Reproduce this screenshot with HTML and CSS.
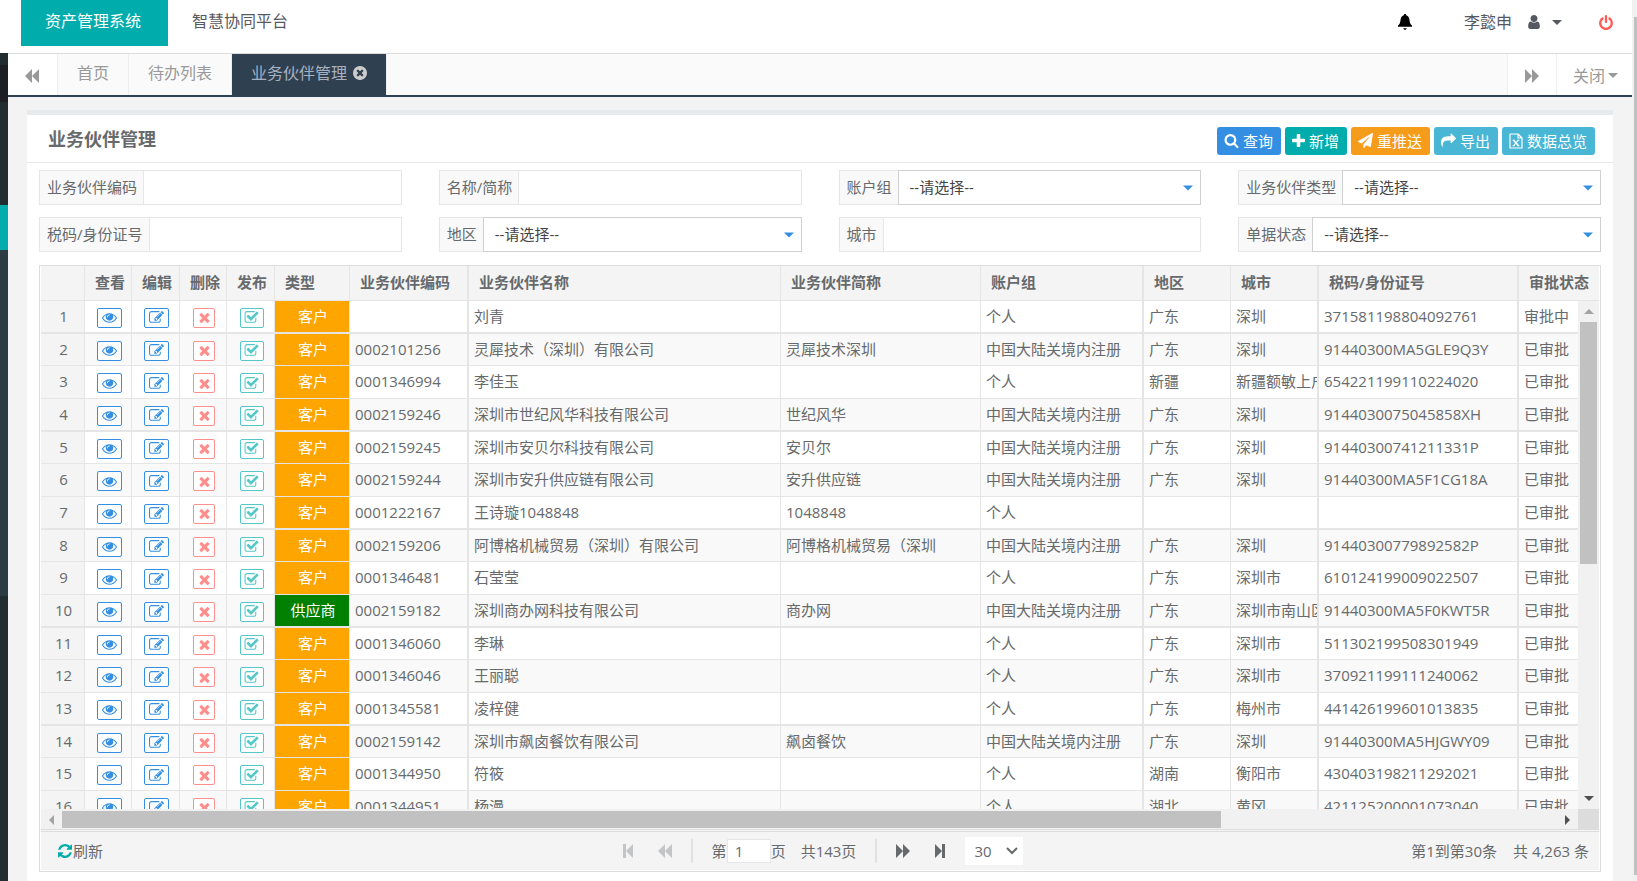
FILE: index.html
```html
<!DOCTYPE html>
<html lang="zh-CN">
<head>
<meta charset="utf-8">
<title>业务伙伴管理</title>
<link rel="stylesheet" href="styles.css">
</head>
<body>
<svg class="sprite" aria-hidden="true">
  <symbol id="i-eye" viewBox="0 0 1792 1792"><path d="M1664 960q-152-236-381-353 61 104 61 225 0 185-131.5 316.5t-316.5 131.5-316.5-131.5-131.5-316.5q0-121 61-225-229 117-381 353 133 205 333.5 326.5t434.5 121.5 434.5-121.5 333.5-326.5zm-720-384q0-20-14-34t-34-14q-125 0-214.5 89.5t-89.5 214.5q0 20 14 34t34 14 34-14 14-34q0-86 61-147t147-61q20 0 34-14t14-34zm848 384q0 34-20 69-140 230-376.5 368.5t-499.5 138.5-499.5-139-376.5-368q-20-35-20-69t20-69q140-229 376.5-368t499.5-139 499.5 139 376.5 368q20 35 20 69z"/></symbol>
  <symbol id="i-edit" viewBox="0 0 1792 1792"><path d="M888 1184l116-116-152-152-116 116v56h96v96h56zm440-720q-16-16-33 1l-350 350q-17 17-1 33t33-1l350-350q17-17 1-33zm80 594v190q0 119-84.5 203.5t-203.5 84.5h-832q-119 0-203.5-84.5t-84.5-203.5v-832q0-119 84.5-203.5t203.5-84.5h832q63 0 117 25 15 7 18 23 3 17-9 29l-49 49q-14 14-32 8-23-6-45-6h-832q-66 0-113 47t-47 113v832q0 66 47 113t113 47h832q66 0 113-47t47-113v-126q0-13 9-22l64-64q15-15 35-7t20 29zm-96-738l288 288-672 672h-288v-288zm444 132l-92 92-288-288 92-92q28-28 68-28t68 28l152 152q28 28 28 68t-28 68z"/></symbol>
  <symbol id="i-times" viewBox="0 0 1792 1792"><path d="M1490 1322q0 40-28 68l-136 136q-28 28-68 28t-68-28l-294-294-294 294q-28 28-68 28t-68-28l-136-136q-28-28-28-68t28-68l294-294-294-294q-28-28-28-68t28-68l136-136q28-28 68-28t68 28l294 294 294-294q28-28 68-28t68 28l136 136q28 28 28 68t-28 68l-294 294 294 294q28 28 28 68z"/></symbol>
  <symbol id="i-check" viewBox="0 0 1792 1792"><path d="M1472 930v318q0 119-84.5 203.5t-203.5 84.5h-832q-119 0-203.5-84.5t-84.5-203.5v-832q0-119 84.5-203.5t203.5-84.5h832q63 0 117 25 15 7 18 23 3 17-9 29l-49 49q-10 10-23 10-3 0-9-2-23-6-45-6h-832q-66 0-113 47t-47 113v832q0 66 47 113t113 47h832q66 0 113-47t47-113v-254q0-13 9-22l64-64q10-10 23-10 6 0 12 3 20 8 20 29zm231-489l-814 814q-24 24-57 24t-57-24l-430-430q-24-24-24-57t24-57l110-110q24-24 57-24t57 24l263 263 647-647q24-24 57-24t57 24l110 110q24 24 24 57t-24 57z"/></symbol>
  <symbol id="i-search" viewBox="0 0 1792 1792"><path d="M1216 832q0-185-131.5-316.5t-316.5-131.5-316.5 131.5-131.5 316.5 131.5 316.5 316.5 131.5 316.5-131.5 131.5-316.5zm512 832q0 52-38 90t-90 38q-54 0-90-38l-343-342q-179 124-399 124-143 0-273.5-55.5t-225-150-150-225-55.5-273.5 55.5-273.5 150-225 225-150 273.5-55.5 273.5 55.5 225 150 150 225 55.5 273.5q0 220-124 399l343 343q37 37 37 90z"/></symbol>
  <symbol id="i-plus" viewBox="192 130 1408 1408"><path d="M1600 736v192q0 40-28 68t-68 28h-416v416q0 40-28 68t-68 28h-192q-40 0-68-28t-28-68v-416h-416q-40 0-68-28t-28-68v-192q0-40 28-68t68-28h416v-416q0-40 28-68t68-28h192q40 0 68 28t28 68v416h416q40 0 68 28t28 68z"/></symbol>
  <symbol id="i-send" viewBox="0 0 1792 1792"><path d="M1764 11q33 24 27 64l-256 1536q-5 29-32 45-14 8-31 8-11 0-24-5l-453-185-242 295q-18 23-49 23-13 0-22-4-19-7-30.5-23.5t-11.5-36.5v-349l864-1059-1069 925-395-162q-37-14-40-55-2-40 32-59l1664-960q15-9 32-9 20 0 36 11z"/></symbol>
  <symbol id="i-share" viewBox="0 0 1792 1792"><path d="M1792 640q0 26-19 45l-512 512q-19 19-45 19t-45-19-19-45v-256h-224q-98 0-175.5 6t-154 21.5-133 42.5-105.5 69.5-80 101-48.5 138.5-17.5 181q0 55 5 123 0 6 2.5 23.5t2.5 26.5q0 15-8.5 25t-23.5 10q-16 0-28-17-7-9-13-22t-13.5-30-10.5-24q-127-285-127-451 0-199 53-333 162-403 875-403h224v-256q0-26 19-45t45-19 45 19l512 512q19 19 19 45z"/></symbol>
  <symbol id="i-excel" viewBox="0 0 14 16"><path fill="none" stroke="currentColor" stroke-width="1.2" stroke-linejoin="round" d="M1 1h8l4 4v10H1zM9 1v4h4"/><path fill="none" stroke="currentColor" stroke-width="1.6" d="M4.5 7.2l5 5.6"/><path fill="none" stroke="currentColor" stroke-width="1.1" d="M9.3 7.2l-4.8 5.6M3.6 7.2h2.2M8.2 7.2h2.2M3.6 12.8h2.2M8.2 12.8h2.2"/></symbol>
  <symbol id="i-bell" viewBox="0 0 14 16"><path d="M7 0c.8 0 1.200.5 1.200 1.300C10.400 2 11.300 3.800 11.500 6c.2 2.800.8 4 2.500 5.500v1.300H0v-1.300C1.700 10 2.300 8.800 2.500 6c.2-2.200 1.100-4 3.300-4.700C5.800.5 6.200 0 7 0zM5.200 14.300h3.600c-.2.9-.9 1.500-1.800 1.500s-1.600-.6-1.800-1.500z"/></symbol>
  <symbol id="i-user" viewBox="256 128 1280 1536"><path d="M1536 1399q0 109-62.5 187t-150.5 78h-854q-88 0-150.5-78t-62.5-187q0-85 8.500-160.500t31.500-152 58.500-131 94-89 134.500-34.500q131 128 313 128t313-128q76 0 134.500 34.500t94 89 58.500 131 31.500 152 8.500 160.500zm-256-887q0 159-112.500 271.500t-271.500 112.500-271.500-112.500-112.500-271.500 112.500-271.500 271.500-112.500 271.500 112.500 112.500 271.500z"/></symbol>
  <symbol id="i-power" viewBox="128 0 1536 1664"><path d="M1664 896q0 156-61 298t-164 245-245 164-298 61-298-61-245-164-164-245-61-298q0-182 80.500-343t226.500-270q43-32 95.500-25t83.500 50q32 42 24.500 94.500t-49.500 84.500q-98 74-151.500 181t-53.500 228q0 104 40.500 198.500t109.500 163.500 163.500 109.500 198.500 40.500 198.500-40.500 163.500-109.500 109.500-163.500 40.500-198.500q0-121-53.500-228t-151.500-181q-42-32-49.500-84.500t24.500-94.500q31-43 84-50t95 25q146 109 226.500 270t80.500 343zm-640-768v640q0 52-38 90t-90 38-90-38-38-90v-640q0-52 38-90t90-38 90 38 38 90z"/></symbol>
  <symbol id="i-close" viewBox="128 128 1536 1536"><path d="M1277 1122q0-26-19-45l-181-181 181-181q19-19 19-45 0-27-19-46l-90-90q-19-19-46-19-26 0-45 19l-181 181-181-181q-19-19-45-19-27 0-46 19l-90 90q-19 19-19 46 0 26 19 45l181 181-181 181q-19 19-19 45 0 27 19 46l90 90q19 19 46 19 26 0 45-19l181-181 181 181q19 19 45 19 27 0 46-19l90-90q19-19 19-46zm387-226q0 209-103 385.500t-279.500 279.500-385.500 103-385.500-103-279.500-279.500-103-385.500 103-385.500 279.500-279.500 385.500-103 385.500 103 279.500 279.500 103 385.500z"/></symbol>
  <symbol id="i-refresh" viewBox="128 128 1536 1536"><path d="M1639 1056q0 5-1 7-64 268-268 434.500t-478 166.500q-146 0-282.500-55t-243.500-157l-129 129q-19 19-45 19t-45-19-19-45v-448q0-26 19-45t45-19h448q26 0 45 19t19 45-19 45l-137 137q71 66 161 102t187 36q134 0 250-65t186-179q11-17 53-117 8-23 30-23h192q13 0 22.500 9.500t9.500 22.500zm25-800v448q0 26-19 45t-45 19h-448q-26 0-45-19t-19-45 19-45l138-138q-148-137-349-137-134 0-250 65t-186 179q-11 17-53 117-8 23-30 23h-199q-13 0-22.500-9.500t-9.500-22.500v-7q65-268 270-434.500t480-166.500q146 0 284 55.500t245 156.500l130-129q19-19 45-19t45 19 19 45z"/></symbol>
  <symbol id="i-back" viewBox="0 0 14 14"><path d="M7 0v14L0 7zM14 0v14L7 7z"/></symbol>
  <symbol id="i-forward" viewBox="0 0 14 14"><path d="M0 0v14l7-7zM7 0v14l7-7z"/></symbol>
  <symbol id="i-first" viewBox="0 0 10 14"><path d="M0 0h3v14H0zM10 0v14L3 7z"/></symbol>
  <symbol id="i-last" viewBox="0 0 10 14"><path d="M7 0h3v14H7zM0 0v14l7-7z"/></symbol>
  <symbol id="i-caret" viewBox="0 0 10 5"><path d="M0 0h10L5 5z"/></symbol>
  <symbol id="i-chevron" viewBox="0 0 12 8"><path fill="none" stroke="currentColor" stroke-width="2" d="M1 1l5 5 5-5"/></symbol>
</svg>

<div class="window">
  <div class="screen">
    <header class="topbar">
      <nav class="systems">
        <a class="system system-on" href="#">资产管理系统</a>
        <a class="system" href="#">智慧协同平台</a>
      </nav>
      <div class="account">
        <button class="plain bell" type="button" aria-label="通知"><svg><use href="#i-bell"/></svg></button>
        <button class="plain user" type="button">李懿申<svg class="user-icon"><use href="#i-user"/></svg><svg class="caret"><use href="#i-caret"/></svg></button>
        <button class="plain power" type="button" aria-label="退出"><svg><use href="#i-power"/></svg></button>
      </div>
    </header>

    <div class="workspace">
      <aside class="rail"><i class="r1"></i><i class="r2"></i><i class="r3"></i><i class="r4"></i><i class="r5"></i><i class="r6"></i></aside>
      <div class="content">
        <nav class="tabs">
          <button class="tab tab-arrow" type="button" aria-label="向左"><svg><use href="#i-back"/></svg></button>
          <button class="tab" type="button">首页</button>
          <button class="tab" type="button">待办列表</button>
          <button class="tab tab-on" type="button">业务伙伴管理<svg><use href="#i-close"/></svg></button>
          <button class="tab tab-arrow tab-right" type="button" aria-label="向右"><svg><use href="#i-forward"/></svg></button>
          <button class="tab tab-close" type="button">关闭<svg class="caret"><use href="#i-caret"/></svg></button>
        </nav>

        <main class="panel">
          <div class="panel-head">
            <h1>业务伙伴管理</h1>
            <div class="actions">
              <button class="btn blue" type="button"><svg><use href="#i-search"/></svg>查询</button>
              <button class="btn teal" type="button"><svg class="small"><use href="#i-plus"/></svg>新增</button>
              <button class="btn orange" type="button"><svg><use href="#i-send"/></svg>重推送</button>
              <button class="btn sky" type="button"><svg><use href="#i-share"/></svg>导出</button>
              <button class="btn sky" type="button"><svg class="sheet"><use href="#i-excel"/></svg>数据总览</button>
            </div>
          </div>

          <form class="filters">
            <div class="field"><label for="f1">业务伙伴编码</label><input id="f1" type="text"></div>
            <div class="field"><label for="f2">名称/简称</label><input id="f2" type="text"></div>
            <div class="field"><label for="f3">账户组</label><div class="pick"><select id="f3"><option>--请选择--</option></select><svg><use href="#i-caret"/></svg></div></div>
            <div class="field"><label for="f4">业务伙伴类型</label><div class="pick"><select id="f4"><option>--请选择--</option></select><svg><use href="#i-caret"/></svg></div></div>
            <div class="field"><label for="f5">税码/身份证号</label><input id="f5" type="text"></div>
            <div class="field"><label for="f6">地区</label><div class="pick"><select id="f6"><option>--请选择--</option></select><svg><use href="#i-caret"/></svg></div></div>
            <div class="field"><label for="f7">城市</label><input id="f7" type="text"></div>
            <div class="field"><label for="f8">单据状态</label><div class="pick"><select id="f8"><option>--请选择--</option></select><svg><use href="#i-caret"/></svg></div></div>
          </form>

          <section class="grid">
            <table class="table head">
              <colgroup><col class="c-no"><col class="c-47"><col class="c-48"><col class="c-47"><col class="c-48"><col class="c-type"><col class="c-code"><col class="c-name"><col class="c-200"><col class="c-group"><col class="c-area"><col class="c-city"><col class="c-200"><col></colgroup>
              <thead><tr><th></th><th>查看</th><th>编辑</th><th>删除</th><th>发布</th><th>类型</th><th class="wide">业务伙伴编码</th><th>业务伙伴名称</th><th>业务伙伴简称</th><th class="wide">账户组</th><th>地区</th><th class="wide">城市</th><th class="wide">税码/身份证号</th><th>审批状态</th></tr></thead>
            </table>
            <div class="rows">
              <div class="viewport">
                <table class="table">
                  <colgroup><col class="c-no"><col class="c-47"><col class="c-48"><col class="c-47"><col class="c-48"><col class="c-type"><col class="c-code"><col class="c-name"><col class="c-200"><col class="c-group"><col class="c-area"><col class="c-city"><col class="c-200"><col></colgroup>
                  <tbody id="partners"></tbody>
                </table>
              </div>
              <div class="scroll scroll-y"><i class="arrow up"></i><div class="track"><i class="thumb"></i></div><i class="arrow down"></i></div>
              <div class="scroll scroll-x"><i class="arrow left"></i><div class="track"><i class="thumb"></i></div><i class="arrow right"></i></div>
              <div class="corner"></div>
            </div>
            <footer class="pager">
              <button class="plain refresh" type="button"><svg><use href="#i-refresh"/></svg>刷新</button>
              <div class="pages">
                <button class="plain off" type="button" aria-label="首页"><svg class="end"><use href="#i-first"/></svg></button>
                <button class="plain off prev" type="button" aria-label="上一页"><svg><use href="#i-back"/></svg></button>
                <i class="sep"></i>
                <label class="page-no">第<input type="text" value="1">页</label>
                <span class="total">共143页</span>
                <i class="sep"></i>
                <button class="plain next" type="button" aria-label="下一页"><svg><use href="#i-forward"/></svg></button>
                <button class="plain last" type="button" aria-label="末页"><svg class="end"><use href="#i-last"/></svg></button>
                <div class="size"><select aria-label="每页条数"><option>30</option></select><svg><use href="#i-chevron"/></svg></div>
              </div>
              <div class="summary"><span>第1到第30条</span><span>共 4,263 条</span></div>
            </footer>
          </section>
        </main>
      </div>
    </div>
  </div>
  <div class="page-scroll"><i></i></div>
</div>
<script src="app.js"></script>
</body>
</html>
```
FILE: styles.css
```css
* { box-sizing: border-box; }
body {
  margin: 0;
  font: 15px/20px "Open Sans", "Noto Sans CJK SC", sans-serif;
  color: #676a6c;
  background: #fff;
}
button, input, select { font: inherit; color: inherit; }
button { cursor: pointer; }
i { display: block; }
svg { width: 14px; height: 14px; fill: currentColor; flex: none; }
.sprite { position: absolute; width: 0; height: 0; }
.plain { display: flex; align-items: center; padding: 0; border: 0; background: none; }
.caret { width: 10px; height: 5px; }

.window { display: flex; height: 100vh; overflow: hidden; }
.screen { flex: 1; min-width: 0; display: flex; flex-direction: column; }
.page-scroll { width: 5px; padding: 17px 0 6px 2px; background: #f1f1f1; }
.page-scroll i { height: 100%; background: #c1c1c1; }

/* Top bar */
.topbar { display: flex; justify-content: space-between; align-items: flex-start; height: 53px; padding: 0 19px 0 21px; font-size: 16px; }
.systems { display: flex; }
.system { height: 46px; padding: 0 27px 0 24px; line-height: 42px; color: #575962; text-decoration: none; }
.system-on { background: #00acac; color: #fff; }
.account { display: flex; align-items: center; height: 44px; color: #575962; }
.bell { color: #000; margin-right: 52px; }
.bell svg { height: 16px; }
.user-icon { margin: 0 11px 0 15px; }
.power { color: #ff5b57; margin-left: 37px; }
.power svg { height: 15px; }

/* Side rail */
.workspace { flex: 1; min-height: 0; display: flex; }
.rail { width: 8px; display: flex; flex-direction: column; background: #222d32; }
.r1 { height: 12px; }
.r2 { height: 37px; background: #1e1f24; }
.r3 { height: 103px; }
.r4 { height: 45px; background: #00acac; }
.r5 { height: 346px; background: #2c3b41; }
.r6 { flex: 1; }
.content { flex: 1; min-width: 0; display: flex; flex-direction: column; background: #f3f3f4; }

/* Tabs */
.tabs { display: flex; height: 44px; border-top: 1px solid #dcdcdc; border-bottom: 2px solid #2f4050; background: #fafafa; color: #999; font-size: 16px; }
.tab { display: flex; align-items: center; padding: 0 19px 3px; border: 0; border-right: 1px solid #eee; background: none; }
.tab-arrow { width: 50px; padding: 2px 18px 0 17px; background: #fff; }
.tab-on { padding: 0 19px 3px; gap: 6px; background: #2f4050; color: #a7b1c2; }
.tab-on svg { color: #ccc; }
.tab-right { margin-left: auto; border-left: 1px solid #eee; }
.tab-close { gap: 3px; padding: 2px 14px 0 16px; border: 0; background: #fff; }

/* Panel */
.panel { flex: 1; min-height: 0; display: flex; flex-direction: column; margin: 13px 19px 0; padding-bottom: 9px; border-top: 5px solid #e7eaec; background: #fff; }
.panel-head { display: flex; justify-content: space-between; align-items: center; height: 48px; padding: 0 18px 0 21px; border-bottom: 1px solid #e7eaec; }
h1 { margin: 0; font-size: 18px; line-height: 24px; font-weight: 600; }
.actions { display: flex; gap: 4px; padding-top: 4px; }
.btn { display: flex; align-items: center; gap: 4px; height: 28px; padding: 0 8px 0 7px; border: 0; border-radius: 3px; color: #fff; }
.btn svg { width: 15px; height: 15px; }
.btn .small { width: 13px; height: 13px; }
.btn .sheet { width: 14px; height: 16px; }
.blue { background: #348fe2; }
.teal { background: #00acac; }
.orange { background: #f59c1a; }
.sky { background: #49b6d6; }

.filters { display: grid; grid-template-columns: repeat(4, 1fr); gap: 12px 37px; padding: 7px 12px 13px; }
.field { display: flex; height: 35px; }
.field label { padding: 0 6px 0 7px; line-height: 33px; border: 1px solid #e5e6e7; border-right: 0; background: #f9f9f9; white-space: nowrap; }
.field input { flex: 1; min-width: 0; padding: 0 10px; border: 1px solid #e5e6e7; background: #fff; }
.pick { position: relative; flex: 1; display: flex; }
.pick select { flex: 1; appearance: none; padding: 0 11px 2px; border: 1px solid #d0d0d0; border-radius: 0; background: #fff; color: #444; }
.pick svg { position: absolute; right: 8px; top: 15px; width: 10px; height: 6px; color: #348fe2; pointer-events: none; }

/* Data grid */
.grid { flex: 1; min-height: 0; display: flex; flex-direction: column; margin: 0 12px; padding: 0 1px 1px; border: 1px solid #ddd; }
.table { width: 100%; table-layout: fixed; border-collapse: separate; border-spacing: 0; }
.c-no { width: 44px; }
.c-47 { width: 47px; }
.c-48 { width: 48px; }
.c-type { width: 75px; }
.c-code { width: 119px; }
.c-name { width: 312px; }
.c-200 { width: 200px; }
.c-group { width: 163px; }
.c-area { width: 87px; }
.c-city { width: 88px; }
th, td { padding: 0; overflow: hidden; white-space: nowrap; text-align: left; border: 0 solid #e5e5e5; border-width: 0 1px 1px 0; }
th { height: 35px; padding: 0 0 2px 10px; font-weight: 600; background: #f4f4f4; }
th:last-child { border-right: 0; }
td { height: 33px; padding: 0 0 2px 5px; }
.wide { border-right-width: 2px; }
tr:nth-child(3n+1) td { border-bottom-width: 2px; }
tr:nth-child(3n+2) td { height: 32px; }
tbody tr:nth-child(even) { background: #f9f9f9; }
td:last-child { border-right: 0; }
td.no { padding: 0 0 2px 2px; text-align: center; background: #f4f4f4; }
td.act { padding: 2px 0 0 2px; }
.act button { display: flex; align-items: center; justify-content: center; width: 25px; height: 20px; margin: 0 auto; padding: 0; border: 1px solid; border-radius: 2px; background: #fff; }
.act svg { width: 15px; height: 15px; }
.act .view, .act .edit { color: #348fe2; }
.act .del { width: 22px; color: #ff8f8d; }
.act .pub { width: 24px; color: #54c8c8; }
td.kind { padding: 0 0 2px 2px; text-align: center; color: #fff; background: orange; }
td.supplier { background: green; }

.rows { flex: 1; min-height: 0; display: grid; grid-template: minmax(0, 1fr) 20px / minmax(0, 1fr) 21px; }
.viewport { overflow: hidden; }
.scroll { display: flex; background: #f1f1f1; }
.scroll-y { flex-direction: column; padding: 0 2px; }
.scroll-x { padding: 2px 0 1px; }
.track { flex: 1; }
.thumb { width: calc(100% * 31 / 40); height: 100%; background: #c1c1c1; }
.scroll-y .thumb { width: 100%; height: 52%; }
.arrow { display: grid; place-items: center; width: 21px; height: 17px; }
.scroll-y .arrow { width: 17px; height: 21px; }
.arrow::before { content: ""; border: 5px solid transparent; }
.up::before { border-top: 0; border-bottom-color: #a3a3a3; }
.down::before { border-bottom: 0; border-top-color: #505050; }
.left::before { border-left: 0; border-right-color: #a3a3a3; }
.right::before { border-right: 0; border-left-color: #505050; }
.corner { background: #dcdcdc; }

.pager { display: grid; grid-template-columns: 1fr auto 1fr; align-items: center; height: 41px; border-top: 3px double #ddd; background: #f4f4f4; }
.refresh { padding-left: 17px; gap: 1px; }
.refresh svg { color: #00acac; }
.pages { display: flex; align-items: center; padding-left: 6px; }
.end { width: 10px; }
.off { color: #c4c5c6; }
.prev { margin-left: 25px; }
.sep { width: 2px; height: 24px; margin: 0 19px; background: #e2e2e2; }
.page-no { display: flex; align-items: center; }
.page-no input { width: 44px; height: 24px; padding: 0 7px; border: 1px solid #e5e6e7; background: #fff; }
.total { margin-left: 15px; }
.last { margin: 0 20px 0 25px; }
.size { position: relative; }
.size select { appearance: none; width: 58px; height: 28px; padding: 0 9px; border: 0; background: #fff; }
.size svg { position: absolute; right: 5px; top: 10px; width: 12px; height: 8px; fill: none; pointer-events: none; }
.summary { display: flex; justify-content: flex-end; gap: 16px; padding-right: 10px; }
```
FILE: app.js
```js
const CN = '中国大陆关境内注册';
const partners = [
  ['', '刘青', '', '个人', '广东', '深圳', '371581198804092761', '审批中'],
  ['0002101256', '灵犀技术（深圳）有限公司', '灵犀技术深圳', CN, '广东', '深圳', '91440300MA5GLE9Q3Y'],
  ['0001346994', '李佳玉', '', '个人', '新疆', '新疆额敏上户', '654221199110224020'],
  ['0002159246', '深圳市世纪风华科技有限公司', '世纪风华', CN, '广东', '深圳', '9144030075045858XH'],
  ['0002159245', '深圳市安贝尔科技有限公司', '安贝尔', CN, '广东', '深圳', '91440300741211331P'],
  ['0002159244', '深圳市安升供应链有限公司', '安升供应链', CN, '广东', '深圳', '91440300MA5F1CG18A'],
  ['0001222167', '王诗璇1048848', '1048848', '个人', '', '', ''],
  ['0002159206', '阿博格机械贸易（深圳）有限公司', '阿博格机械贸易（深圳', CN, '广东', '深圳', '91440300779892582P'],
  ['0001346481', '石莹莹', '', '个人', '广东', '深圳市', '610124199009022507'],
  ['0002159182', '深圳商办网科技有限公司', '商办网', CN, '广东', '深圳市南山区', '91440300MA5F0KWT5R'],
  ['0001346060', '李琳', '', '个人', '广东', '深圳市', '511302199508301949'],
  ['0001346046', '王丽聪', '', '个人', '广东', '深圳市', '370921199111240062'],
  ['0001345581', '凌梓健', '', '个人', '广东', '梅州市', '441426199601013835'],
  ['0002159142', '深圳市飙卤餐饮有限公司', '飙卤餐饮', CN, '广东', '深圳', '91440300MA5HJGWY09'],
  ['0001344950', '符筱', '', '个人', '湖南', '衡阳市', '430403198211292021'],
  ['0001344951', '杨漫', '', '个人', '湖北', '黄冈', '421125200001073040']
];
const suppliers = new Set(['0002159182']);
const actions = [['view', 'eye', '查看'], ['edit', 'edit', '编辑'], ['del', 'times', '删除'], ['pub', 'check', '发布']];
const wide = new Set([0, 3, 5, 6]);

document.getElementById('partners').innerHTML = partners.map((p, n) => {
  const buttons = actions.map(([cls, icon, label]) =>
    `<td class="act"><button type="button" class="${cls}" aria-label="${label}"><svg><use href="#i-${icon}"/></svg></button></td>`).join('');
  const supplier = suppliers.has(p[0]);
  const kind = `<td class="kind${supplier ? ' supplier' : ''}">${supplier ? '供应商' : '客户'}</td>`;
  const cells = p.slice(0, 7).map((v, i) => `<td${wide.has(i) ? ' class="wide"' : ''}>${v}</td>`).join('');
  return `<tr><td class="no">${n + 1}</td>${buttons}${kind}${cells}<td>${p[7] || '已审批'}</td></tr>`;
}).join('');
```
